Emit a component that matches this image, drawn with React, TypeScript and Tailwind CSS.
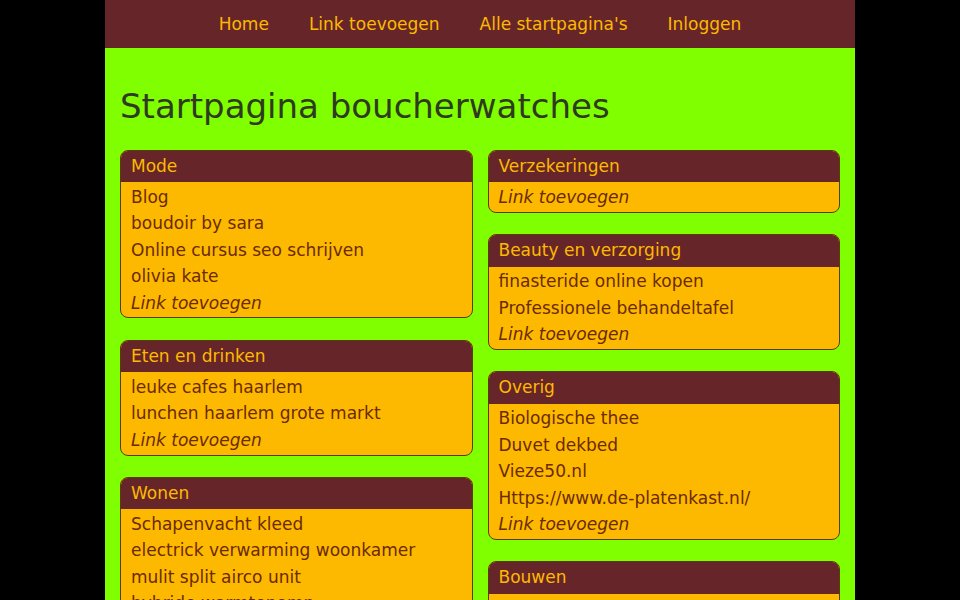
import React from "react";

type Category = {
  title: string;
  links: string[];
};

const leftColumn: Category[] = [
  {
    title: "Mode",
    links: ["Blog", "boudoir by sara", "Online cursus seo schrijven", "olivia kate"],
  },
  {
    title: "Eten en drinken",
    links: ["leuke cafes haarlem", "lunchen haarlem grote markt"],
  },
  {
    title: "Wonen",
    links: [
      "Schapenvacht kleed",
      "electrick verwarming woonkamer",
      "mulit split airco unit",
      "hybride warmtepomp",
    ],
  },
];

const rightColumn: Category[] = [
  { title: "Verzekeringen", links: [] },
  {
    title: "Beauty en verzorging",
    links: ["finasteride online kopen", "Professionele behandeltafel"],
  },
  {
    title: "Overig",
    links: ["Biologische thee", "Duvet dekbed", "Vieze50.nl", "Https://www.de-platenkast.nl/"],
  },
  { title: "Bouwen", links: [] },
];

const navLinks = ["Home", "Link toevoegen", "Alle startpagina's", "Inloggen"];

function Block({ cat }: { cat: Category }) {
  return (
    <div className="rounded-lg border border-[#5c3a0c] bg-[#fdb900] overflow-hidden">
      <div className="bg-[#662629] text-[#fdb900] px-[10px] pt-[2px] pb-[3px] leading-[26.4px]">
        {cat.title}
      </div>
      <ul className="px-[10px] pt-[1.5px] pb-[1.5px] text-[#6b2a00] leading-[26.4px]">
        {cat.links.map((l) => (
          <li key={l}>
            <a href="#">{l}</a>
          </li>
        ))}
        <li className="italic">
          <a href="#">Link toevoegen</a>
        </li>
      </ul>
    </div>
  );
}

export default function App() {
  return (
    <div className="min-h-screen bg-black text-[17px] font-['DejaVu_Sans','Liberation_Sans',sans-serif]">
      <div className="mx-auto w-[750px] min-h-screen bg-[#7fff00]">
        {/* top menu */}
        <nav className="h-12 bg-[#662629] flex justify-center">
          {navLinks.map((n) => (
            <a key={n} href="#" className="px-5 leading-[48px] text-[#fdb900]">
              {n}
            </a>
          ))}
        </nav>

        <main className="px-[15px] pt-[38px] pb-6">
          <h1 className="text-[34px] leading-[40px] text-[#2f3b21] mb-6">
            Startpagina boucherwatches
          </h1>

          <div className="flex gap-[15px] items-start">
            <div className="flex-1 flex flex-col gap-[21.5px]">
              {leftColumn.map((c) => (
                <Block key={c.title} cat={c} />
              ))}
            </div>
            <div className="flex-1 flex flex-col gap-[21.5px]">
              {rightColumn.map((c) => (
                <Block key={c.title} cat={c} />
              ))}
            </div>
          </div>
        </main>
      </div>
    </div>
  );
}
